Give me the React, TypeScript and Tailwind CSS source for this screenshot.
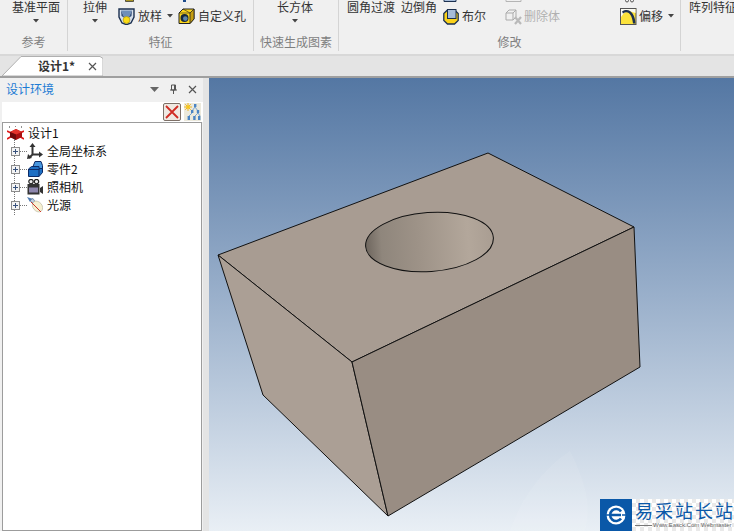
import React from "react";

const Caret = () => (
  <svg width="6" height="4" viewBox="0 0 6 4" className="shrink-0">
    <path d="M0 0h6L3 3.5z" fill="#444" />
  </svg>
);

const LargeButton = ({ label, className }: { label: string; className: string }) => (
  <div className={`flex flex-col items-center ${className}`}>
    <span className="text-[12px] leading-[14px] text-[#333] whitespace-nowrap">{label}</span>
    <div className="mt-[5px]">
      <Caret />
    </div>
  </div>
);

const RibbonGroup = ({
  label,
  width,
  children,
}: {
  label: string;
  width: string;
  children: React.ReactNode;
}) => (
  <div className={`${width} shrink-0 h-[51px] flex flex-col border-r border-[#d4d4d4]`}>
    <div className="h-[35px] flex items-start">{children}</div>
    <div className="text-center text-[12px] leading-[14px] text-[#7f7f7f] whitespace-nowrap">{label}</div>
  </div>
);

// small column: the row above is cut off by the window edge, only a sliver of its icon shows
const SmallColumn = ({ stub, children }: { stub: React.ReactNode; children: React.ReactNode }) => (
  <div className="flex flex-col">
    <div className="h-[3px] overflow-hidden">{stub}</div>
    <div className="mt-[5px] h-[16px] flex items-center">{children}</div>
  </div>
);

const LoftIcon = () => (
  <svg width="17" height="17" viewBox="0 0 17 17" className="shrink-0">
    <path d="M1 1h15v8l-3 6-4 1.5H8L4 15 1 9z" fill="#d6dfeb" stroke="#1c3050" strokeWidth="1.4" />
    <path d="M3 2.5h11L10.5 10h-4z" fill="#6f8fb8" />
    <path d="M3 2.5L6.5 10 3.5 8zM14 2.5L10.5 10l3-2z" fill="#33507c" />
    <circle cx="8.5" cy="12" r="3.4" fill="#fbdc14" stroke="#a68c00" strokeWidth=".6" />
  </svg>
);

const HoleIcon = () => (
  <svg width="17" height="17" viewBox="0 0 17 17" className="shrink-0">
    <path d="M1 5l4-4h11v10l-4 4.5H1z" fill="#fbd51a" stroke="#222" strokeWidth="1" />
    <path d="M12 5l4-4v10l-4 4.5z" fill="#c39c10" stroke="#222" strokeWidth=".8" />
    <path d="M1 5h11M5 1l7 4" fill="none" stroke="#222" strokeWidth=".6" />
    <ellipse cx="6.5" cy="10" rx="4" ry="4" fill="#16283c" />
    <ellipse cx="7.3" cy="10.6" rx="2.3" ry="2.3" fill="#5d86ad" />
  </svg>
);

const BooleanIcon = () => (
  <svg width="16" height="17" viewBox="0 0 16 17" className="shrink-0">
    <path d="M.8 5.5L4.5 2h7l3.7 3.5v7L11.5 16h-7L.8 12.5z" fill="#fbd21a" stroke="#1c3050" strokeWidth="1.3" />
    <rect x="4.5" y="1.5" width="8.5" height="9" fill="#a6bcd9" stroke="#1c3050" strokeWidth="1" />
  </svg>
);

const DeleteBodyIcon = () => (
  <svg width="18" height="18" viewBox="0 0 18 18" className="shrink-0">
    <path d="M1 6l3-3h7v7l-3 3H1zM1 6h7v7M8 6l3-3" fill="none" stroke="#ababab" strokeWidth="1" />
    <path d="M10 10l6 7M16 10l-6 7" stroke="#b9b9b9" strokeWidth="2.2" />
  </svg>
);

const OffsetIcon = () => (
  <svg width="17" height="17" viewBox="0 0 17 17" className="shrink-0">
    <rect x=".5" y=".5" width="15.5" height="16" fill="#fbe23c" stroke="#555" />
    <path d="M1 1h14.5v4L9 3 4 5 1 9z" fill="#fafaf2" />
    <path d="M3 5.5C8 2 12 6 13 15.5h2.5C15 5 9-1 2 3.5z" fill="#1c3050" />
  </svg>
);

const Ribbon = () => (
  <div className="h-[56px] bg-[#f0f0f0] border-b-2 border-[#d8d8d8] flex font-['Noto_Sans_CJK_SC',sans-serif] overflow-hidden">
    <RibbonGroup label="参考" width="w-[68px]">
      <LargeButton label="基准平面" className="w-[67px] pl-[5px]" />
    </RibbonGroup>

    <RibbonGroup label="特征" width="w-[186px]">
      <LargeButton label="拉伸" className="w-[50px] pl-[4px]" />
      <SmallColumn
        stub={
          <svg width="70" height="3" viewBox="0 0 70 3">
            <path d="M7.5 0h8v1.5h-8z" fill="#f7d416" stroke="#333" strokeWidth=".8" />
            <rect x="65" y="0" width="3" height="2" fill="#1c4a8a" />
          </svg>
        }
      >
        <LoftIcon />
        <span className="ml-[3px] text-[12px] text-[#333] leading-[14px]">放样</span>
        <div className="ml-[5px] mr-[5px]">
          <Caret />
        </div>
        <HoleIcon />
        <span className="ml-[3px] text-[12px] text-[#333] leading-[14px] whitespace-nowrap">自定义孔</span>
      </SmallColumn>
    </RibbonGroup>

    <RibbonGroup label="快速生成图素" width="w-[85px]">
      <LargeButton label="长方体" className="w-[82px]" />
    </RibbonGroup>

    <RibbonGroup label="修改" width="w-[342px]">
      <div className="pl-[8px] flex items-start">
        <span className="text-[12px] leading-[14px] text-[#333] whitespace-nowrap">圆角过渡</span>
        <span className="ml-[6px] text-[12px] leading-[14px] text-[#333] whitespace-nowrap">边倒角</span>
        <div className="ml-[6px]">
          <SmallColumn
            stub={
              <svg width="16" height="3" viewBox="0 0 16 3">
                <path d="M1 0v1.5h12V0" fill="#a6bcd9" stroke="#1c3050" />
              </svg>
            }
          >
            <BooleanIcon />
            <span className="ml-[3px] text-[12px] leading-[14px] text-[#333]">布尔</span>
          </SmallColumn>
        </div>
        <div className="ml-[19px]">
          <SmallColumn
            stub={
              <svg width="18" height="3" viewBox="0 0 18 3">
                <path d="M1 0v1.5h15V0" fill="none" stroke="#b5b5b5" />
              </svg>
            }
          >
            <DeleteBodyIcon />
            <span className="ml-[1px] text-[12px] leading-[14px] text-[#b0b0b0] whitespace-nowrap">删除体</span>
          </SmallColumn>
        </div>
        <div className="ml-[60px]">
          <SmallColumn
            stub={
              <svg width="17" height="3" viewBox="0 0 17 3">
                <circle cx="7" cy="0.5" r="1.5" fill="none" stroke="#333" strokeWidth=".8" />
                <circle cx="12" cy="0.5" r="1.5" fill="none" stroke="#333" strokeWidth=".8" />
              </svg>
            }
          >
            <OffsetIcon />
            <span className="ml-[2px] text-[12px] leading-[14px] text-[#333]">偏移</span>
            <div className="ml-[5px]">
              <Caret />
            </div>
          </SmallColumn>
        </div>
      </div>
    </RibbonGroup>

    <div className="pl-[8px]">
      <span className="text-[12px] leading-[14px] text-[#333] whitespace-nowrap block">阵列特征</span>
    </div>
  </div>
);

const TabBar = () => (
  <div className="h-[22px] bg-[#e4e4e4] flex items-end pl-[2px] border-b-2 border-[#9f9f9f] font-['Noto_Sans_CJK_SC',sans-serif]">
    <div className="relative w-[101px] h-[20px] flex items-center">
      <svg width="101" height="20" viewBox="0 0 101 20" className="absolute inset-0">
        <path d="M0 20L19 .5h79l3 2v17.5z" fill="#fff" stroke="#b0b0b0" />
      </svg>
      <span className="relative ml-[36px] text-[12px] font-bold text-[#333] leading-[14px]">设计1*</span>
      <svg width="9" height="9" viewBox="0 0 9 9" className="relative ml-[13px]">
        <path d="M1 1l7 7M8 1L1 8" stroke="#555" strokeWidth="1.2" />
      </svg>
    </div>
  </div>
);

const CrossIcon = () => (
  <div className="w-[18px] h-[18px] border border-[#7d6f66] rounded-[2px] bg-[#efe9e2] flex items-center justify-center">
    <svg width="14" height="14" viewBox="0 0 14 14">
      <path d="M1 1l12 12M13 1L1 13" stroke="#d02c24" strokeWidth="1.8" />
    </svg>
  </div>
);

const SunTreeIcon = () => (
  <svg width="17" height="18" viewBox="0 0 17 18" className="bg-[#ece9dc]">
    <path d="M4 0v8M0 4h8M1.2 1.2l5.6 5.6M6.8 1.2L1.2 6.8" stroke="#f0b010" strokeWidth=".9" />
    <circle cx="4" cy="4" r="1.8" fill="#f7c81a" />
    <path
      d="M11 4l-3 4M11 4l3 4M8 10l-3 3M14 10l-3 3M14 10l2 3"
      stroke="#5b93cf"
      strokeWidth=".8"
      fill="none"
    />
    <rect x="10" y="1" width="2.4" height="3" fill="#4a84c4" />
    <rect x="7" y="7" width="2.4" height="3" fill="#4a84c4" />
    <rect x="12.8" y="7" width="2.4" height="3" fill="#4a84c4" />
    <rect x="3.6" y="13" width="2.4" height="4" fill="#4a84c4" />
    <rect x="9.2" y="13" width="2.4" height="4" fill="#4a84c4" />
    <rect x="14" y="13" width="2.4" height="4" fill="#4a84c4" />
  </svg>
);

const RootIcon = () => (
  <svg width="17" height="15" viewBox="0 0 17 15" className="shrink-0">
    <path d="M0 5l4 2M17 5l-4 2M0 13l5-3M17 13l-5-3" stroke="#e01818" strokeWidth="1.6" />
    <path d="M2 1h1M8 0h1M14 1h1" stroke="#222" strokeWidth="1" strokeDasharray="1 1" />
    <path d="M3 6l6-3 6 3v5l-6 3-6-3z" fill="#a81010" />
    <path d="M3 6l6 2.5 6-2.5-6-3z" fill="#e4322a" />
    <path d="M3 6l6 2.5V14l-6-3z" fill="#700a0a" />
  </svg>
);

const AxesIcon = () => (
  <svg width="16" height="16" viewBox="0 0 16 16">
    <path d="M5.5 3v8.5M5.5 11.5h7M5.5 11.5L2 15" stroke="#333" strokeWidth="2" fill="none" />
    <path d="M5.5 0l3 4h-6zM16 11.5l-4-3v6zM0 16l1-5 4 4z" fill="#333" />
  </svg>
);

const PartIcon = () => (
  <svg width="15" height="16" viewBox="0 0 15 16">
    <path d="M.5 8l3-2.5h11v6L11 15.5H.5z" fill="#1e6fc4" stroke="#0c2a66" />
    <path d="M.5 8.5H11v7M11 8.5l3.5-3" fill="none" stroke="#0c2a66" />
    <path d="M5 5.5l2-5h6l1.5 4v3H11V5.5z" fill="#4796de" stroke="#0c2a66" />
  </svg>
);

const CameraIcon = () => (
  <svg width="16" height="16" viewBox="0 0 16 16">
    <circle cx="4" cy="2.6" r="2.2" fill="#eee" stroke="#222" strokeWidth="1.2" />
    <circle cx="9.5" cy="2.6" r="2.2" fill="#eee" stroke="#222" strokeWidth="1.2" />
    <rect x=".5" y="5" width="12" height="10.5" fill="#333" />
    <rect x="2" y="8.5" width="9" height="5" fill="#8d86ad" />
    <path d="M13 9l3-2v8l-3-2z" fill="#333" />
  </svg>
);

const LightIcon = () => (
  <svg width="16" height="16" viewBox="0 0 16 16">
    <path d="M0 0l6 2-3 3z" fill="#4f7db4" />
    <path d="M3 3l3-1.5 2 3-3 1.5z" fill="#c4d2e2" stroke="#3d5f8c" strokeWidth=".6" />
    <ellipse cx="10.5" cy="9.5" rx="4.5" ry="6" transform="rotate(-40 10.5 9.5)" fill="#f6f0d2" stroke="#b8b6a0" strokeWidth=".6" />
    <path d="M4 5l10 10" stroke="#cc3428" strokeWidth="1" />
  </svg>
);

const TreeRow = ({ icon, label }: { icon: React.ReactNode; label: string }) => (
  <div className="h-[18px] flex items-center">
    <div className="w-[9px] h-[9px] ml-[8px] shrink-0 bg-[#f4f4f4] border border-[#8c8c8c] flex items-center justify-center relative z-10">
      <svg width="5" height="5" viewBox="0 0 5 5">
        <path d="M0 2.5h5M2.5 0v5" stroke="#38527c" strokeWidth="1" />
      </svg>
    </div>
    <div className="w-[7px] border-t border-dotted border-[#777] shrink-0" />
    <div className="w-[16px] h-[18px] flex items-center justify-center shrink-0">{icon}</div>
    <span className="ml-[4px] text-[12px] leading-[14px] text-[#111]">{label}</span>
  </div>
);

const SidePanel = () => (
  <div className="w-[203px] shrink-0 bg-[#f0f0f0] flex flex-col font-['Noto_Sans_CJK_SC',sans-serif]">
    <div className="h-[24px] flex items-center pl-[6px] pr-[6px] pb-[2px]">
      <span className="text-[12px] leading-[14px] text-[#1c7bd4] flex-1">设计环境</span>
      <svg width="9" height="5" viewBox="0 0 9 5">
        <path d="M0 0h9L4.5 5z" fill="#666" />
      </svg>
      <svg width="9" height="10" viewBox="0 0 9 10" className="ml-[10px]">
        <path d="M2.5 1h4v5h-4zM1 6h7M4.5 6v4M5.5 1v5" fill="none" stroke="#555" />
      </svg>
      <svg width="9" height="9" viewBox="0 0 9 9" className="ml-[10px]">
        <path d="M1 1l7 7M8 1L1 8" stroke="#555" strokeWidth="1.2" />
      </svg>
    </div>
    <div className="h-[20px] bg-white flex items-center justify-end pr-[2px] ml-[2px] gap-[3px]">
      <CrossIcon />
      <SunTreeIcon />
    </div>
    <div className="flex-1 bg-white border border-[#9c9c9c] ml-[2px] mr-[1px] pt-[1px] relative">
      <div className="absolute left-[11px] top-[16px] h-[76px] border-l border-dotted border-[#777]" />
      <div className="h-[18px] flex items-center pl-[4px]">
        <RootIcon />
        <span className="ml-[4px] text-[12px] leading-[14px] text-[#111]">设计1</span>
      </div>
      <TreeRow icon={<AxesIcon />} label="全局坐标系" />
      <TreeRow icon={<PartIcon />} label="零件2" />
      <TreeRow icon={<CameraIcon />} label="照相机" />
      <TreeRow icon={<LightIcon />} label="光源" />
    </div>
  </div>
);

const Watermark = () => (
  <div className="absolute right-0 bottom-0 w-[134px] h-[32px] flex bg-white bg-[repeating-conic-gradient(#e9e9e9_0%_25%,#ffffff_0%_50%)] bg-[length:8px_8px] font-['Noto_Sans_CJK_SC',sans-serif] overflow-hidden">
    <div className="w-[32px] h-[32px] bg-[#0a58a8] flex items-center justify-center shrink-0">
      <svg width="20" height="20" viewBox="0 0 20 20">
        <circle cx="10" cy="10" r="9.5" fill="#fff" />
        <path d="M5 10h10M15 6.5a6 6 0 1 0 0 7" fill="none" stroke="#0a58a8" strokeWidth="2.6" />
        <path d="M0 10h4M16 10h4" stroke="#0a58a8" strokeWidth="1.4" />
      </svg>
    </div>
    <div className="pl-[3px] flex flex-col">
      <span className="text-[18px] leading-[23px] text-[#0a58a8] tracking-[2px] whitespace-nowrap">易采站长站</span>
      <div className="flex items-center">
        <div className="w-[17px] border-t border-[#777] shrink-0" />
        <span className="ml-[1px] text-[6px] leading-[7px] text-[#666] whitespace-nowrap font-['Liberation_Sans',sans-serif]">Www.Easck.Com Webmaster</span>
      </div>
    </div>
  </div>
);

const ModelView = () => (
  <div className="relative flex-1 bg-gradient-to-b from-[#5477a3] to-[#e9eff5] overflow-hidden">
    <svg width="525" height="453" viewBox="209 78 525 453" className="absolute inset-0">
      <defs>
        <linearGradient id="hole" x1="366" y1="0" x2="494" y2="0" gradientUnits="userSpaceOnUse">
          <stop offset="0" stopColor="#6f675f" />
          <stop offset=".12" stopColor="#8f867c" />
          <stop offset=".4" stopColor="#9d9287" />
          <stop offset=".8" stopColor="#b3a79b" />
          <stop offset="1" stopColor="#a99d92" />
        </linearGradient>
      </defs>
      <path d="M510 531c10-30 30-60 60-80 20 40 20 60 15 80z" fill="#ffffff" opacity=".08" />
      <path d="M218 255L488 153L634 227L352 362z" fill="#a89c92" stroke="#111" />
      <path d="M218 255L352 362L388 516L263 395z" fill="#ab9f95" stroke="#111" />
      <path d="M352 362L634 227L640 367L388 516z" fill="#998d83" stroke="#111" />
      <ellipse cx="429.5" cy="242" rx="64" ry="29.5" transform="rotate(-4 429.5 242)" fill="url(#hole)" stroke="#111" strokeWidth="1" />
    </svg>
    <Watermark />
  </div>
);

export default function App() {
  return (
    <div className="w-[734px] h-[531px] flex flex-col overflow-hidden bg-[#e4e4e4]">
      <Ribbon />
      <TabBar />
      <div className="flex-1 flex min-h-0">
        <SidePanel />
        <div className="w-[6px] bg-[#e4e4e4] shrink-0" />
        <ModelView />
      </div>
    </div>
  );
}
